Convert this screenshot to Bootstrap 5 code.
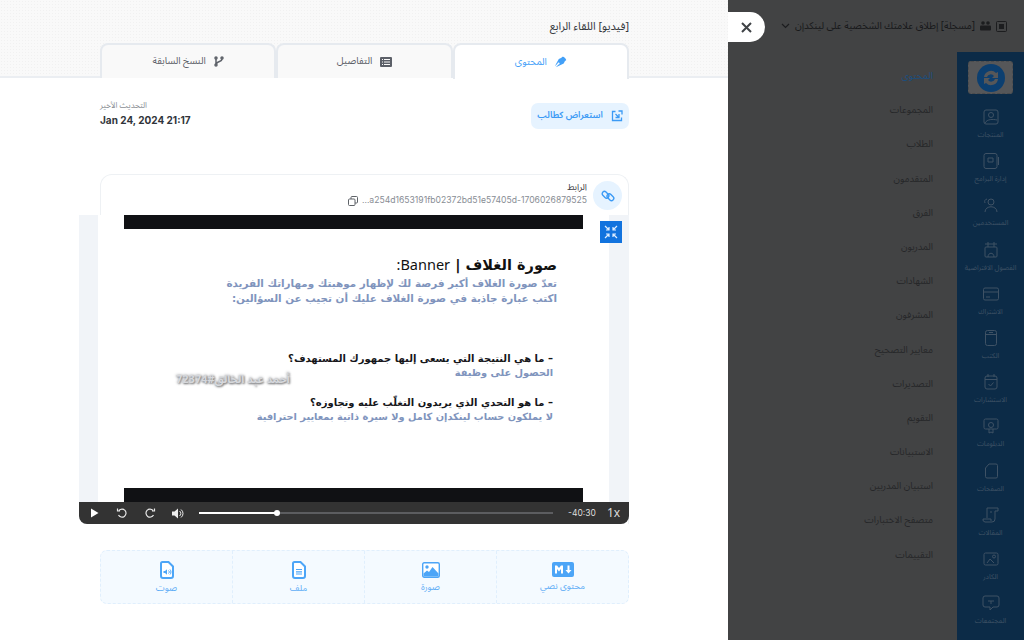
<!DOCTYPE html>
<html lang="ar" dir="rtl">
<head>
<meta charset="utf-8">
<title>اللقاء الرابع</title>
<link href="https://cdn.jsdelivr.net/npm/bootstrap@5.3.0/dist/css/bootstrap.min.css" rel="stylesheet">
<style>
html,body{margin:0;height:640px;overflow:hidden}
body{font-family:"Noto Sans Arabic","Noto Sans","DejaVu Sans",sans-serif;width:1024px;background:#424344;color:#3b3f46;position:relative}
.rest-panel{width:296px;height:640px;background:#424344;flex:none;overflow:hidden}
.rest-top{height:52px;color:#17181a;font-size:9.9px;padding:0 17px 0 0;gap:5px;white-space:nowrap}
.rest-top svg{flex:none}
.side-dark{width:67px;height:588px;background:#0c2b47;flex:none;padding-top:9px}
.logo-box{width:45px;height:33px;background:#565759;border-radius:3px;margin:0 auto 8px;border:1px dashed #4a4b4d}
.rail-item{height:44.2px;color:#3f5265;font-size:7px;line-height:10px;padding-top:6px;white-space:nowrap}
.rail-item svg{display:block;margin:0 auto 4px}
.subnav{width:229px;padding:7px 24px 0 0;font-size:9.5px;color:#262729;flex:none}
.subnav div{height:34.2px;line-height:34.2px}
.subnav .on{color:#1c4e7e}
.drawer{width:728px;height:640px;background:#fff;flex:none}
.drawer-head{background-color:#f9f9f9;background-image:radial-gradient(#f1f1f1 .6px,transparent .7px);background-size:3px 3px;height:78px;padding:0 99px 0 100px;border-bottom:2px solid #ebeef2}
.drawer-title{height:43px;padding-top:19px;font-size:11px;line-height:16px;color:#33363b}
.tab-strip{height:35px;flex-wrap:nowrap}
.tab-strip .nav-item{flex:1 1 0}
.tab-strip .nav-link{height:35px;border:2px solid #e6eaef;border-bottom:0;border-radius:8px 8px 0 0;font-size:9.7px;color:#5c6068;padding:0;background:#f9f9f9;margin:0}
.tab-strip .nav-link.active{background:#fff;color:#43a0f8;height:36px;position:relative}
.drawer-body{padding:25px 99px 0 100px;position:relative}
.view-btn{width:98px;height:26px;background:#e6f3ff;color:#3b9af5;border:0;border-radius:7px;font-size:9px;padding:0;font-weight:600;white-space:nowrap}
.upd-block{text-align:left;margin-top:-3px}
.upd-label{font-size:8px;line-height:12px;color:#8b8f96}
.upd-date{font-size:10px;line-height:16px;font-weight:700;color:#30343a;font-family:"Inter","Noto Sans",sans-serif}
.head-row{height:71px}
.video-card{height:350px;border:1px solid #eef1f4;border-bottom:0;border-radius:12px 12px 0 0}
.link-row{height:40px;padding:6px 6px 0 0;gap:6px}
.link-circle{width:29px;height:29px;background:#e6f3ff;border-radius:50%;flex:none}
.link-label{font-size:9px;line-height:13px;color:#3f4247}
.link-url{font-size:8.6px;line-height:13px;color:#888d94;font-family:"Inter","Noto Sans",sans-serif;direction:ltr;gap:4px}
.player{width:550px;height:309px;margin-right:-1px;margin-left:-21px;background:#f1f4f8;position:relative;border-radius:0 0 8px 8px;overflow:hidden}
.frame{width:511px;height:287px;background:#fff;margin:0 20px 0 19px;padding:0 26px}
.bar-black{height:14px;background:#101114;flex:none}
.slide{height:259px;color:#15161a;font-family:"DejaVu Sans",sans-serif;font-weight:700;padding:24px 26px 0 0}
.slide-title{font-size:14.5px;line-height:22px;color:#111}
.slide-title span{font-family:"Noto Sans",sans-serif;font-weight:400}
.slide-blue{color:#8094bd;font-size:10.4px;line-height:15px}
.slide-q{padding-right:4px;font-size:10px;line-height:14px}
.slide-q.slide-blue{font-size:9.8px}
.watermark{position:absolute;left:97px;top:157px;font-size:11px;color:#d6d8dc;text-shadow:0 0 3px #8a8d93,1px 1px 2px #777;font-weight:700;white-space:nowrap}
.fs-btn{position:absolute;right:7px;top:6px;width:22px;height:22px;background:#1273de;display:flex;align-items:center;justify-content:center}
.ctrl-bar{height:22px;background:#333;direction:ltr;color:#ddd;padding:0 0 0 1px}
.ctrl-btn{width:28px;flex:none;text-align:center;line-height:0}
.track{height:2px;background:#5c5d60;width:354px;margin-left:7px;position:relative;flex:none}
.track i{position:absolute;left:0;top:0;height:2px;background:#fff}
.track b{position:absolute;top:-2px;width:6px;height:6px;margin-left:-3px;border-radius:50%;background:#fff}
.tm{font-size:8.5px;margin-left:15px;width:28px;font-family:"Inter",sans-serif;white-space:nowrap}
.sp{font-size:12px;margin-left:11px;font-family:"Noto Sans",sans-serif}
.types{margin-top:26px;height:54px;background:#f4faff;border:1px dashed #e0effd;border-radius:7px}
.type-cell{flex:1 1 0;color:#5fadf6;font-size:9px;line-height:14px;gap:3px;padding-top:2px;border-left:1px dashed #e0effd}
.type-cell:last-child{border-left:0}
.close-tab{position:absolute;left:728px;top:12px;width:37px;height:30px;background:#fff;border:0;border-radius:0 15px 15px 0;padding:0;display:flex;align-items:center;justify-content:center}
</style>
</head>
<body class="d-flex">

<aside class="rest-panel">
  <div class="rest-top d-flex align-items-center">
    <svg width="11" height="11" viewBox="0 0 11 11" fill="none" stroke="#1c1d1f"><rect x=".5" y=".5" width="10" height="10" rx="1"/><rect x="3" y="3" width="5" height="5" fill="#1c1d1f" stroke="none"/></svg>
    <svg width="11" height="10" viewBox="0 0 11 10" fill="#1c1d1f"><circle cx="3" cy="2" r="1.800"/><circle cx="8" cy="2" r="1.800"/><rect x="0" y="4.500" width="11" height="5" rx="1"/></svg>
    <span>[مسجلة] إطلاق علامتك الشخصية على لينكدإن</span>
    <svg width="9" height="6" viewBox="0 0 9 6" fill="none" stroke="#1c1d1f" stroke-width="1.200"><path d="M1 1l3.500 3.500L8 1"/></svg>
  </div>
  <div class="d-flex">
    <nav class="side-dark text-center">
      <div class="logo-box d-flex align-items-center justify-content-center">
        <svg width="28" height="28" viewBox="0 0 28 28"><circle cx="14" cy="14" r="14" fill="#0c3f70"/><path d="M7 13a7 7 0 0 1 12-4l2-1v6h-6l2-2a4 4 0 0 0-7 1zM21 15a7 7 0 0 1-12 4l-2 1v-6h6l-2 2a4 4 0 0 0 7-1z" fill="#565759"/></svg>
      </div>
      <div class="rail-item"><svg width="18" height="18" viewBox="0 0 18 18" fill="none" stroke="#3f5265"><rect x="2" y="2" width="14" height="14" rx="2"/><circle cx="9" cy="7" r="2.500"/><path d="M3 15c2-4 8-4 12-3"/></svg>المنتجات</div>
      <div class="rail-item"><svg width="18" height="18" viewBox="0 0 18 18" fill="none" stroke="#3f5265"><rect x="2" y="1.500" width="13" height="15" rx="2"/><path d="M6 6h5v4H6zM16.500 5v8"/></svg>إدارة البرامج</div>
      <div class="rail-item"><svg width="18" height="18" viewBox="0 0 18 18" fill="none" stroke="#3f5265"><circle cx="9" cy="6" r="3"/><path d="M3 16c0-7 12-7 12 0M3 7a3 3 0 0 1 2-4"/></svg>المستخدمين</div>
      <div class="rail-item"><svg width="18" height="18" viewBox="0 0 18 18" fill="none" stroke="#3f5265"><rect x="3" y="6" width="12" height="10" rx="1"/><path d="M3 3h12M6 1v5M12 1v5M6 16c0-5 6-5 6 0"/></svg>الفصول الافتراضية</div>
      <div class="rail-item"><svg width="18" height="18" viewBox="0 0 18 18" fill="none" stroke="#3f5265"><rect x="1.500" y="3" width="15" height="12" rx="1.500"/><path d="M1.500 7h15M4 12h4"/></svg>الاشتراك</div>
      <div class="rail-item"><svg width="18" height="18" viewBox="0 0 18 18" fill="none" stroke="#3f5265"><rect x="3.500" y="1.500" width="11" height="15" rx="2"/><path d="M3.500 5.500h11M7 3.500h4"/></svg>الكتب</div>
      <div class="rail-item"><svg width="18" height="18" viewBox="0 0 18 18" fill="none" stroke="#3f5265"><rect x="3" y="3" width="12" height="13" rx="2"/><path d="M3 6.500h12M6 1v3M12 1v3M6.500 11l2 2 3-3.500"/></svg>الاستشارات</div>
      <div class="rail-item"><svg width="18" height="18" viewBox="0 0 18 18" fill="none" stroke="#3f5265"><rect x="2" y="2" width="14" height="10" rx="1.500"/><path d="M7 12v4l2-1 2 1v-4"/><circle cx="9" cy="8" r="2.500"/></svg>الدبلومات</div>
      <div class="rail-item"><svg width="18" height="18" viewBox="0 0 18 18" fill="none" stroke="#3f5265"><path d="M7 2h7a1.500 1.500 0 0 1 1.500 1.500v11A1.500 1.500 0 0 1 14 16H5a1.500 1.500 0 0 1-1.500-1.500V6z"/></svg>الصفحات</div>
      <div class="rail-item"><svg width="18" height="18" viewBox="0 0 18 18" fill="none" stroke="#3f5265"><path d="M5 2h11v3h-3v8a3 3 0 0 1-3 3H3a2.500 2.500 0 0 1-2-3h8v2M5 2v10M8 6h2"/></svg>المقالات</div>
      <div class="rail-item"><svg width="18" height="18" viewBox="0 0 18 18" fill="none" stroke="#3f5265"><rect x="2" y="3" width="14" height="12" rx="1.500"/><circle cx="12" cy="6.500" r="1.500"/><path d="M5 13l3-4 4 4"/></svg>الكادر</div>
      <div class="rail-item"><svg width="18" height="18" viewBox="0 0 18 18" fill="none" stroke="#3f5265"><path d="M3 2h12a2 2 0 0 1 2 2v7a2 2 0 0 1-2 2h-4l-3 3v-3H3a2 2 0 0 1-2-2V4a2 2 0 0 1 2-2z"/><path d="M6 7h6M9 7v3"/></svg>المجتمعات</div>
    </nav>
    <div class="subnav">
      <div class="on">المحتوى</div><div>المجموعات</div><div>الطلاب</div><div>المتقدمون</div><div>الفرق</div><div>المدربون</div><div>الشهادات</div><div>المشرفون</div><div>معايير التصحيح</div><div>التصديرات</div><div>التقويم</div><div>الاستبيانات</div><div>استبيان المدربين</div><div>متصفح الاختبارات</div><div>التقييمات</div>
    </div>
  </div>
</aside>

<main class="drawer">
  <header class="drawer-head">
    <div class="drawer-title">[فيديو] اللقاء الرابع</div>
    <ul class="nav tab-strip p-0">
      <li class="nav-item"><a class="nav-link active d-flex align-items-center justify-content-center gap-2" href="#">
        <svg width="12" height="12" viewBox="0 0 12 12" fill="#43a0f8"><path d="M8 .8c1 0 3.200 2.200 3.200 3.200 0 .5-.6.9-1.100.8L8.700 7.500 3 10.200l-2.200 1 2.700-2.700a1 1 0 1 0-.9-.9L0 10.200l1-2.200L3.800 3l2.700-1.200C6.400 1.300 7.500.8 8 .8z"/></svg>المحتوى</a></li>
      <li class="nav-item"><a class="nav-link d-flex align-items-center justify-content-center gap-2" href="#">
        <svg width="12" height="10" viewBox="0 0 12 10" fill="#5c6068"><path d="M1 0h10a1 1 0 0 1 1 1v8a1 1 0 0 1-1 1H1a1 1 0 0 1-1-1V1a1 1 0 0 1 1-1zm1 2v1h1V2zm2 0v1h6V2zM2 4.500v1h1v-1zm2 0v1h6v-1zM2 7v1h1V7zm2 0v1h6V7z" fill-rule="evenodd"/></svg>التفاصيل</a></li>
      <li class="nav-item"><a class="nav-link d-flex align-items-center justify-content-center gap-2" href="#">
        <svg width="10" height="11" viewBox="0 0 10 11" fill="none" stroke="#5c6068" stroke-width="1.500"><circle cx="2" cy="2" r="1"/><circle cx="2" cy="9" r="1"/><circle cx="8" cy="2" r="1"/><path d="M2 3v5M8 3c0 3-4 2-5.500 4.500"/></svg>النسخ السابقة</a></li>
    </ul>
  </header>
  <div class="drawer-body">
    <div class="head-row d-flex justify-content-between align-items-start">
      <button class="view-btn btn d-flex align-items-center justify-content-center gap-2" type="button">
        <svg width="12" height="12" viewBox="0 0 12 12" fill="none" stroke="#3b9af5" stroke-width="1.300"><path d="M4.500 1.500h-3v9h9v-3M4.500 4l3.500 3.500M8 4v3.500H4.500M7.500 1H11v3.500"/></svg>استعراض كطالب</button>
      <div class="upd-block"><div class="upd-label">التحديث الأخير</div><div class="upd-date">Jan 24, 2024 21:17</div></div>
    </div>
    <section class="video-card">
      <div class="link-row d-flex">
        <div class="link-circle d-flex align-items-center justify-content-center">
          <svg width="14" height="14" viewBox="0 0 14 14" fill="none" stroke="#3b9af5" stroke-width="1.400"><rect x=".8" y="3.500" width="7.500" height="4.500" rx="2.200" transform="rotate(45 4.500 5.700)"/><rect x="5.700" y="6" width="7.500" height="4.500" rx="2.200" transform="rotate(45 9.500 8.200)"/></svg>
        </div>
        <div>
          <div class="link-label">الرابط</div>
          <div class="link-url d-flex align-items-center justify-content-end">
            <svg width="10" height="10" viewBox="0 0 10 10" fill="none" stroke="#5f6368"><rect x=".5" y="3" width="6.500" height="6.500" rx="1"/><path d="M3 3V1.500a1 1 0 0 1 1-1h4.500a1 1 0 0 1 1 1V6a1 1 0 0 1-1 1H7"/></svg>
            <span>...a254d1653191fb02372bd51e57405d-1706026879525</span>
          </div>
        </div>
      </div>
      <div class="player">
        <div class="frame d-flex flex-column">
          <div class="bar-black"></div>
          <div class="slide">
            <div class="slide-title">صورة الغلاف | <span>Banner:</span></div>
            <div class="slide-blue">تعدّ صورة الغلاف أكبر فرصة لك لإظهار موهبتك ومهاراتك الفريدة</div>
            <div class="slide-blue">اكتب عبارة جاذبة في صورة الغلاف عليك أن تجيب عن السؤالين:</div>
            <div class="slide-q" style="margin-top:46px">– ما هي النتيجة التي يسعى إليها جمهورك المستهدف؟</div>
            <div class="slide-q slide-blue">الحصول على وظيفة</div>
            <div class="slide-q" style="margin-top:16px">– ما هو التحدي الذي يريدون التغلّب عليه وتجاوزه؟</div>
            <div class="slide-q slide-blue">لا يملكون حساب لينكدإن كامل ولا سيرة ذاتية بمعايير احترافية</div>
          </div>
          <div class="bar-black"></div>
        </div>
        <div class="watermark">أحمد عبد الخالق#72374</div>
        <div class="fs-btn"><svg width="14" height="14" viewBox="0 0 14 14" fill="none" stroke="#dfeeff" stroke-width="1.200"><path d="M1 1l4 4M5 2v3H2M13 1L9 5M9 2v3h3M1 13l4-4M5 12V9H2M13 13L9 9M9 12V9h3"/></svg></div>
        <div class="ctrl-bar d-flex align-items-center">
          <div class="ctrl-btn"><svg width="9" height="10" viewBox="0 0 9 10" fill="#fff"><path d="M1 .5l7.500 4.500L1 9.500z"/></svg></div>
          <div class="ctrl-btn"><svg width="12" height="12" viewBox="0 0 12 12" fill="none" stroke="#e8e8e8" stroke-width="1.200"><path d="M3 3.500A4 4 0 1 1 2.500 8M1.500 1.500v2.500H4"/></svg></div>
          <div class="ctrl-btn"><svg width="12" height="12" viewBox="0 0 12 12" fill="none" stroke="#e8e8e8" stroke-width="1.200"><path d="M9 3.500A4 4 0 1 0 9.500 8M10.500 1.500v2.500H8"/></svg></div>
          <div class="ctrl-btn"><svg width="12" height="11" viewBox="0 0 12 11" fill="#eee"><path d="M0 3.500h2.500L6 .5v10L2.500 7.500H0z"/><path d="M7.500 3a3 3 0 0 1 0 5M9 1.500a5 5 0 0 1 0 8" fill="none" stroke="#eee"/></svg></div>
          <div class="track"><i style="width:78px"></i><b style="left:78px"></b></div>
          <div class="tm">-40:30</div>
          <div class="sp">1x</div>
        </div>
      </div>
    </section>
    <section class="types d-flex">
      <div class="type-cell d-flex flex-column align-items-center justify-content-center">
        <svg width="22" height="15" viewBox="0 0 22 15"><rect width="22" height="15" rx="2" fill="#4ca5f7"/><path d="M3 11.500v-8h2l2 2.500 2-2.500h2v8H9V7l-2 2.500L5 7v4.500zM15.500 3.500h2V8h2l-3 3.500-3-3.500h2z" fill="#fff"/></svg>
        محتوى نصي</div>
      <div class="type-cell d-flex flex-column align-items-center justify-content-center">
        <svg width="18" height="16" viewBox="0 0 18 16"><rect x=".7" y=".7" width="16.600" height="14.600" rx="1.500" fill="#fff" stroke="#4ca5f7" stroke-width="1.400"/><circle cx="5" cy="5" r="1.700" fill="#4ca5f7"/><path d="M1.500 14.500v-3l3.500-3 2 1.500 3.500-5 6 6.500v3z" fill="#4ca5f7"/></svg>
        صورة</div>
      <div class="type-cell d-flex flex-column align-items-center justify-content-center">
        <svg width="14" height="18" viewBox="0 0 14 18"><path d="M2.500 1h6L13 5.500V15a2 2 0 0 1-2 2H3a2 2 0 0 1-2-2V2.500A1.500 1.500 0 0 1 2.500 1z" fill="#fff" stroke="#4ca5f7" stroke-width="2"/><path d="M4 8.500h6M4 10.800h6M4 13h6" stroke="#4ca5f7" stroke-width="1.200"/></svg>
        ملف</div>
      <div class="type-cell d-flex flex-column align-items-center justify-content-center">
        <svg width="14" height="18" viewBox="0 0 14 18"><path d="M2.500 1h6L13 5.500V15a2 2 0 0 1-2 2H3a2 2 0 0 1-2-2V2.500A1.500 1.500 0 0 1 2.500 1z" fill="#fff" stroke="#4ca5f7" stroke-width="2"/><path d="M3.500 10h1.500l2-1.800v5.600L5 12H3.500z" fill="#4ca5f7"/><path d="M8.500 9.500c1 .8 1 2.200 0 3M10 8.500c1.300 1.500 1.300 3.500 0 5" fill="none" stroke="#4ca5f7"/></svg>
        صوت</div>
    </section>
  </div>
</main>

<button class="close-tab" type="button" aria-label="إغلاق">
  <svg width="11" height="11" viewBox="0 0 11 11" fill="none" stroke="#3f4246" stroke-width="2"><path d="M1 1l9 9M10 1l-9 9"/></svg>
</button>
<script src="https://cdn.jsdelivr.net/npm/bootstrap@5.3.0/dist/js/bootstrap.bundle.min.js"></script>
</body>
</html>
